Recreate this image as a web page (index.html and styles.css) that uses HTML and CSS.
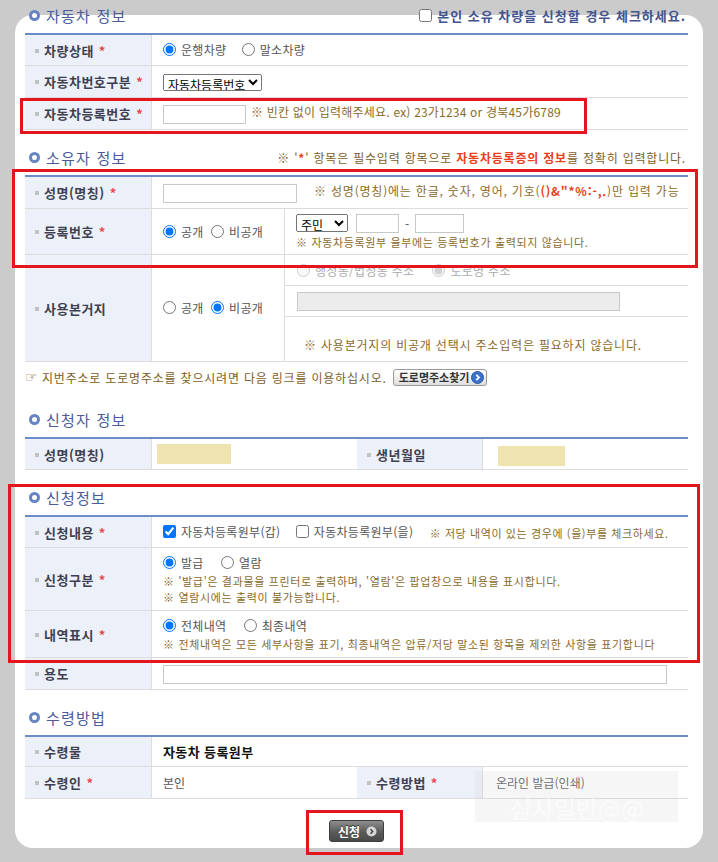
FILE: index.html
```html
<!DOCTYPE html>
<html lang="ko">
<head>
    <meta charset="UTF-8">
    <meta name="viewport" content="width=device-width, initial-scale=1.0">
    <title>자동차 등록원부 발급 신청</title>
    <link rel="stylesheet" href="styles.css">
</head>
<body>
    <div class="panel">
        <!-- 자동차 정보 -->
        <div class="sec-title first">
            <h2><i class="dot"></i>자동차 정보</h2>
            <label class="self-chk"><input type="checkbox">본인 소유 차량을 신청할 경우 체크하세요.</label>
        </div>
        <table class="form">
            <colgroup><col class="c-lb"><col></colgroup>
            <tr class="h31">
                <th>차량상태<em>*</em></th>
                <td>
                    <label class="opt"><input type="radio" name="carState" checked>운행차량</label>
                    <label class="opt"><input type="radio" name="carState">말소차량</label>
                </td>
            </tr>
            <tr class="h32">
                <th>자동차번호구분<em>*</em></th>
                <td><select class="sel-kind"><option>자동차등록번호</option></select></td>
            </tr>
            <tr class="h32">
                <th>자동차등록번호<em>*</em></th>
                <td><input type="text" class="txt w-carno"><span class="hint ml5 narrow">※ 빈칸 없이 입력해주세요. ex) 23가1234 or 경북45가6789</span></td>
            </tr>
        </table>

        <!-- 소유자 정보 -->
        <div class="sec-title">
            <h2><i class="dot"></i>소유자 정보</h2>
            <p class="req-note">※ '<b class="red">*</b>' 항목은 필수입력 항목으로 <b class="red">자동차등록증의 정보</b>를 정확히 입력합니다.</p>
        </div>
        <table class="form">
            <colgroup><col class="c-lb"><col class="c-open"><col></colgroup>
            <tr class="h32">
                <th>성명(명칭)<em>*</em></th>
                <td colspan="2"><input type="text" class="txt w-name"><span class="hint ml17">※ 성명(명칭)에는 한글, 숫자, 영어, 기호(<b class="red">()&amp;"*%:-,.</b>)만 입력 가능</span></td>
            </tr>
            <tr class="h46">
                <th>등록번호<em>*</em></th>
                <td class="bd-r">
                    <label class="opt tight"><input type="radio" name="regOpen" checked>공개</label>
                    <label class="opt"><input type="radio" name="regOpen">비공개</label>
                </td>
                <td class="top">
                    <div class="regno">
                        <select class="sel-jumin"><option>주민</option></select>
                        <input type="text" class="txt w-rn1">
                        <span class="dash">-</span>
                        <input type="text" class="txt w-rn2">
                    </div>
                    <p class="sm-note">※ 자동차등록원부 을부에는 등록번호가 출력되지 않습니다.</p>
                </td>
            </tr>
            <tr class="h107">
                <th>사용본거지</th>
                <td class="bd-r">
                    <label class="opt tight"><input type="radio" name="addrOpen">공개</label>
                    <label class="opt"><input type="radio" name="addrOpen" checked>비공개</label>
                </td>
                <td class="addr">
                    <div class="sub">
                        <label class="opt off"><input type="radio" name="addrType" disabled>행정동/법정동 주소</label>
                        <label class="opt off"><input type="radio" name="addrType" disabled checked>도로명 주소</label>
                    </div>
                    <div class="sub"><input type="text" class="txt w-addr" disabled></div>
                    <div class="sub last"><span class="hint">※ 사용본거지의 비공개 선택시 주소입력은 필요하지 않습니다.</span></div>
                </td>
            </tr>
        </table>
        <p class="link-note">
            <span class="hand">☞</span>지번주소로 도로명주소를 찾으시려면 다음 링크를 이용하십시오.
            <button class="btn-addr">도로명주소찾기<svg width="13" height="13" viewBox="0 0 13 13"><circle cx="6.5" cy="6.5" r="6" fill="#3d6fcc" stroke="#2c57a8"/><path d="M5.3 3.8 L8 6.5 L5.3 9.2" fill="none" stroke="#fff" stroke-width="1.8"/></svg></button>
        </p>

        <!-- 신청자 정보 -->
        <div class="sec-title sec3">
            <h2><i class="dot"></i>신청자 정보</h2>
        </div>
        <table class="form">
            <colgroup><col class="c-lb"><col class="c-val"><col class="c-lb2"><col></colgroup>
            <tr class="h31">
                <th>성명(명칭)</th>
                <td class="pl5"><span class="mask w74"></span></td>
                <th>생년월일</th>
                <td class="pl15"><span class="mask w67"></span></td>
            </tr>
        </table>

        <!-- 신청정보 -->
        <div class="sec-title">
            <h2><i class="dot"></i>신청정보</h2>
        </div>
        <table class="form">
            <colgroup><col class="c-lb"><col></colgroup>
            <tr class="h31">
                <th>신청내용<em>*</em></th>
                <td>
                    <label class="opt"><input type="checkbox" checked>자동차등록원부(갑)</label>
                    <label class="opt"><input type="checkbox">자동차등록원부(을)</label>
                    <span class="hint sm">※ 저당 내역이 있는 경우에 (을)부를 체크하세요.</span>
                </td>
            </tr>
            <tr class="h63">
                <th>신청구분<em>*</em></th>
                <td class="top pt6">
                    <label class="opt wide"><input type="radio" name="reqType" checked>발급</label>
                    <label class="opt"><input type="radio" name="reqType">열람</label>
                    <p class="sm-note">※ '발급'은 결과물을 프린터로 출력하며, '열람'은 팝업창으로 내용을 표시합니다.</p>
                    <p class="sm-note">※ 열람시에는 출력이 불가능합니다.</p>
                </td>
            </tr>
            <tr class="h47">
                <th>내역표시<em>*</em></th>
                <td class="top pt6">
                    <label class="opt wide"><input type="radio" name="histType" checked>전체내역</label>
                    <label class="opt"><input type="radio" name="histType">최종내역</label>
                    <p class="sm-note">※ 전체내역은 모든 세부사항을 표기, 최종내역은 압류/저당 말소된 항목을 제외한 사항을 표기합니다</p>
                </td>
            </tr>
            <tr class="h32">
                <th>용도</th>
                <td><input type="text" class="txt w-use"></td>
            </tr>
        </table>

        <!-- 수령방법 -->
        <div class="sec-title">
            <h2><i class="dot"></i>수령방법</h2>
        </div>
        <table class="form">
            <colgroup><col class="c-lb"><col class="c-val"><col class="c-lb2"><col></colgroup>
            <tr class="h30">
                <th>수령물</th>
                <td colspan="3" class="strong">자동차 등록원부</td>
            </tr>
            <tr class="h32">
                <th>수령인<em>*</em></th>
                <td>본인</td>
                <th>수령방법<em>*</em></th>
                <td class="pl13">온라인 발급(인쇄)</td>
            </tr>
        </table>

        <div class="btn-area">
            <button class="btn-submit">신청<svg width="11" height="11" viewBox="0 0 11 11"><circle cx="5.5" cy="5.5" r="5" fill="#d6d6d6"/><path d="M4.5 3.2 L6.7 5.5 L4.5 7.8" fill="none" stroke="#444" stroke-width="1.5"/></svg></button>
        </div>
    </div>

    <div class="watermark">심사일반@@</div>

    <div class="mark m1"></div>
    <div class="mark m2"></div>
    <div class="mark m3"></div>
    <div class="mark m4"></div>
</body>
</html>
```

FILE: styles.css
```css
* {
    box-sizing: border-box;
}

body {
    position: relative;
    margin: 0;
    height: 862px;
    overflow: hidden;
    background: #cbcbcb;
    font-family: "Noto Sans CJK KR", "Noto Sans", sans-serif;
    font-size: 12px;
    color: #555;
}

.panel {
    display: flow-root;
    width: 688px;
    margin: 15px 0 0 15px;
    padding: 0 15px 6px 10px;
    background: #fff;
    border-radius: 18px;
}

/* 섹션 제목 */
.sec-title {
    display: flex;
    align-items: center;
    justify-content: space-between;
    height: 22px;
    margin: 16px 0 7px;
}

.sec-title.first {
    margin-top: -11px;
}

.sec-title.sec3 {
    margin-top: 22px;
}

.sec-title h2 {
    display: flex;
    align-items: center;
    gap: 6px;
    margin: 0;
    padding-left: 4px;
    font-size: 15px;
    font-weight: normal;
    letter-spacing: 1.2px;
    color: #4b5b9b;
}

.dot {
    display: inline-block;
    width: 11px;
    height: 11px;
    border: 3px solid #6584c4;
    border-radius: 50%;
    background: #fff;
}

.self-chk {
    display: flex;
    align-items: center;
    padding-right: 2px;
    font-size: 13px;
    font-weight: bold;
    letter-spacing: 1px;
    color: #44548f;
}

.self-chk input {
    margin: 0 5px 0 0;
}

.req-note {
    margin: 0;
    padding-right: 2px;
    letter-spacing: 0.8px;
    color: #7d5d26;
}

.red {
    color: #e8401c;
}

/* 폼 테이블 */
.form {
    width: 100%;
    table-layout: fixed;
    border-collapse: separate;
    border-spacing: 0;
    border-top: 2px solid #6d8cc7;
}

.form col.c-lb { width: 127px; }
.form col.c-open { width: 133px; }
.form col.c-val { width: 205px; }
.form col.c-lb2 { width: 126px; }

.form th,
.form td {
    border-bottom: 1px solid #dcdcdc;
    vertical-align: middle;
    text-align: left;
    white-space: nowrap;
}

.form th {
    padding: 0 0 0 10px;
    background: #ecf1f9;
    border-right: 1px solid #dcdcdc;
    font-size: 13px;
    font-weight: bold;
    letter-spacing: 0.5px;
    color: #3f3f52;
}

.form th::before {
    content: "";
    display: inline-block;
    width: 4px;
    height: 4px;
    margin: 0 5px 2px 0;
    background: #c2c2c2;
    vertical-align: middle;
}

.form th em {
    margin-left: 5px;
    font-style: normal;
    color: #e8484f;
}

.form td {
    padding: 0 0 0 11px;
}

.form td.bd-r { border-right: 1px solid #dcdcdc; }
.form td.top { vertical-align: top; padding-top: 4px; }
.form td.pt6 { padding-top: 6px; }
.form td.pl5 { padding-left: 5px; }
.form td.pl13 { padding-left: 13px; }
.form td.pl15 { padding-left: 15px; }
.form td.strong { font-size: 13px; font-weight: bold; letter-spacing: 0.4px; color: #111; }

.h30 > * { height: 30px; }
.h31 > * { height: 31px; }
.h32 > * { height: 32px; }
.h46 > * { height: 46px; }
.h47 > * { height: 47px; }
.h63 > * { height: 63px; }
.h107 > * { height: 107px; }

/* 입력 요소 */
.opt {
    display: inline-flex;
    align-items: center;
    margin-right: 12px;
    letter-spacing: 0.3px;
    color: #555;
}

.opt.tight { margin-right: 4px; }
.opt.wide { margin-right: 14px; }
.opt.off { color: #aaa; margin-right: 18px; }

.opt input {
    margin: 0 5px 0 0;
}

.txt {
    height: 19px;
    padding: 0 3px;
    border: 1px solid #c8c8c8;
    font-size: 12px;
    vertical-align: middle;
}

.txt:disabled {
    background: #ececec;
}

.w-carno { width: 83px; }
.w-name { width: 134px; }
.w-rn1 { width: 43px; margin-left: 8px; }
.w-rn2 { width: 49px; }
.w-addr { width: 323px; }
.w-use { width: 504px; }

.sel-kind {
    width: 99px;
    height: 17px;
    padding: 0;
    font-size: 12px;
    font-family: inherit;
    vertical-align: middle;
}

.sel-jumin {
    width: 52px;
    height: 18px;
    padding: 0;
    font-size: 12px;
    font-family: inherit;
    vertical-align: middle;
}

.regno {
    display: flex;
    align-items: center;
    height: 20px;
}

.dash {
    margin: 0 6px;
}

.hint {
    letter-spacing: 0.8px;
    color: #8a6a2c;
}

.hint.narrow {
    letter-spacing: 0.2px;
}

.hint.sm {
    margin-left: 1px;
    font-size: 11px;
    letter-spacing: 0.6px;
}

.ml5 { margin-left: 5px; }
.ml17 { margin-left: 17px; }

.sm-note {
    margin: 2px 0 0;
    font-size: 11px;
    line-height: 14px;
    letter-spacing: 0.65px;
    color: #8a6a2c;
}

/* 사용본거지 주소 */
.form td.addr {
    padding: 0;
    vertical-align: top;
}

.sub {
    display: flex;
    align-items: center;
    height: 31px;
    padding-left: 12px;
    border-bottom: 1px solid #dcdcdc;
}

.sub.last {
    height: 44px;
    padding: 10px 0 0 19px;
    border-bottom: none;
}

.link-note {
    display: flex;
    align-items: center;
    height: 18px;
    margin: 6px 0 0;
    letter-spacing: 0.8px;
    color: #7d5d26;
}

.hand {
    width: 17px;
    font-family: "DejaVu Sans", sans-serif;
    font-size: 14px;
    color: #8a6a2c;
}

.btn-addr {
    display: inline-flex;
    align-items: center;
    gap: 2px;
    height: 17px;
    margin-left: 6px;
    padding: 0 2px 0 5px;
    border: 1px solid #999;
    border-radius: 3px;
    background: linear-gradient(#ffffff, #dedede);
    font-family: inherit;
    font-size: 11px;
    font-weight: bold;
    letter-spacing: 0;
    color: #333;
}

.mask {
    display: inline-block;
    height: 20px;
    background: #efe3b0;
    vertical-align: middle;
}

.w74 { width: 74px; }
.w67 { width: 67px; margin-top: 4px; }

/* 신청 버튼 */
.btn-area {
    padding: 21px 0 0;
    text-align: center;
}

.btn-submit {
    display: inline-flex;
    align-items: center;
    gap: 6px;
    height: 22px;
    padding: 0 6px 0 8px;
    border: 1px solid #3d3d3d;
    border-radius: 3px;
    background: linear-gradient(#8e8e8e, #5a5a5a 55%, #4a4a4a);
    font-family: inherit;
    font-size: 12px;
    font-weight: bold;
    color: #fff;
    text-shadow: 0 -1px 0 #333;
}

.watermark {
    position: absolute;
    left: 475px;
    top: 771px;
    width: 203px;
    height: 51px;
    padding-top: 24px;
    background: rgba(215, 215, 215, 0.22);
    font-size: 24px;
    line-height: 26px;
    text-align: center;
    color: rgba(255, 255, 255, 0.6);
}

/* 주석 표시 박스 */
.mark {
    position: absolute;
    border: 3px solid #e3161f;
}

.m1 { left: 20px; top: 98px; width: 567px; height: 36px; }
.m2 { left: 12px; top: 169px; width: 686px; height: 99px; }
.m3 { left: 8px; top: 484px; width: 692px; height: 179px; }
.m4 { left: 306px; top: 810px; width: 97px; height: 45px; }
```
